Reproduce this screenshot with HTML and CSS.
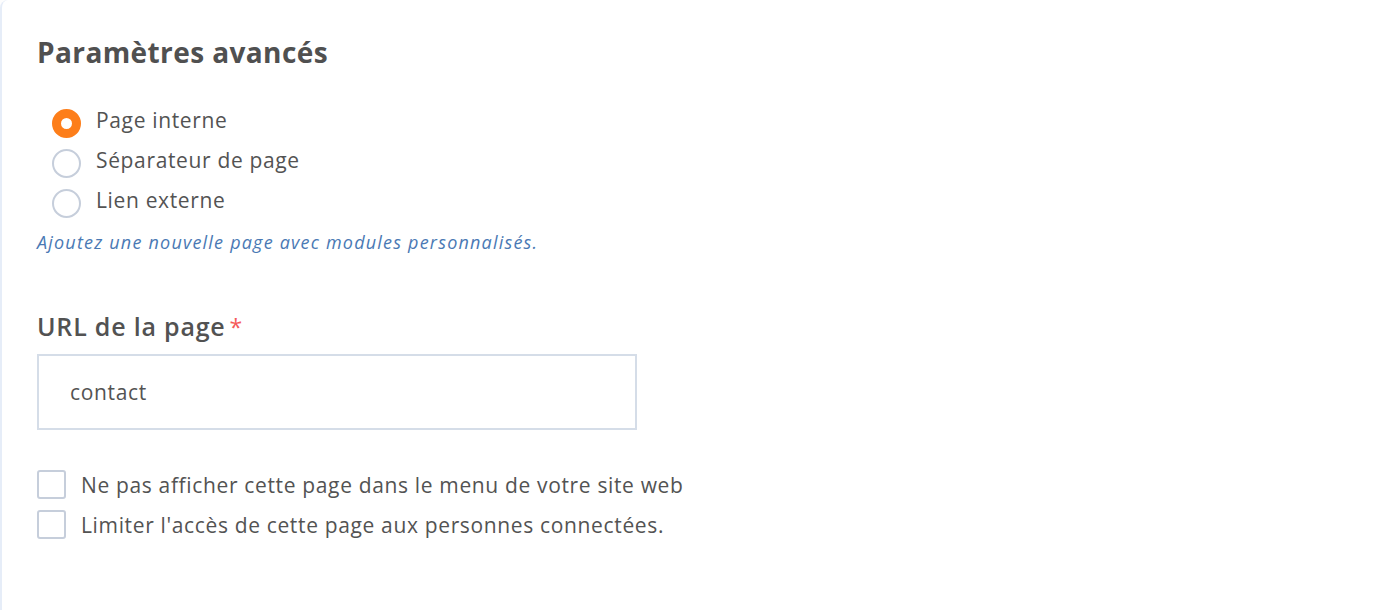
FILE: index.html
```html
<!DOCTYPE html>
<html lang="fr">
<head>
<meta charset="utf-8">
<title>Paramètres avancés</title>
<link rel="stylesheet" href="styles.css">
</head>
<body>
<div class="card">
  <h2 class="title">Paramètres avancés</h2>
  <div class="radios">
    <label class="radio-row"><span class="radio checked"></span><span class="opt">Page interne</span></label>
    <label class="radio-row"><span class="radio"></span><span class="opt">Séparateur de page</span></label>
    <label class="radio-row"><span class="radio"></span><span class="opt">Lien externe</span></label>
  </div>
  <p class="help">Ajoutez une nouvelle page avec modules personnalisés.</p>
  <div class="field">
    <label class="field-label">URL de la page<span class="req">*</span></label>
    <div class="input">contact</div>
  </div>
  <div class="checks">
    <label class="check-row"><span class="box"></span><span class="opt">Ne pas afficher cette page dans le menu de votre site web</span></label>
    <label class="check-row"><span class="box"></span><span class="opt">Limiter l'accès de cette page aux personnes connectées.</span></label>
  </div>
</div>
</body>
</html>
```
FILE: styles.css
```css
html, body {
  margin: 0;
  padding: 0;
  background: #fdfdfd;
}
body {
  font-family: "Open Sans", "Noto Sans", sans-serif;
  color: #535353;
  height: 610px;
  overflow: hidden;
}
.card {
  background: #fff;
  border-left: 2px solid #e6edf8;
  border-top-left-radius: 8px;
  height: 640px;
  padding: 34px 0 0 35px;
  box-sizing: border-box;
}
.title {
  margin: 0;
  font-size: 28px;
  font-weight: 700;
  letter-spacing: 0.4px;
  line-height: 36px;
  color: #505050;
}
.radios {
  display: flex;
  flex-direction: column;
  gap: 10px;
  margin-top: 35px;
  padding-left: 15px;
}
.radio-row {
  display: flex;
  align-items: center;
  gap: 15px;
  height: 30px;
}
.radio {
  width: 29px;
  height: 29px;
  box-sizing: border-box;
  border-radius: 50%;
  border: 2px solid #c6cedb;
  background: #fff;
  flex: none;
  margin-top: 7px;
}
.radio.checked {
  border: 9.5px solid #fd7e1a;
}
.opt {
  font-size: 21px;
  letter-spacing: 0.65px;
  line-height: 30px;
}
.help {
  margin: 15px 0 0;
  font-size: 18px;
  font-style: italic;
  letter-spacing: 1.2px;
  color: #4a79b4;
  line-height: 24px;
}
.field {
  margin-top: 57px;
}
.field-label {
  display: block;
  font-size: 25px;
  font-weight: 600;
  letter-spacing: 0.8px;
  line-height: 30px;
  color: #525252;
}
.req {
  color: #f55a5a;
  margin-left: 4px;
  font-size: 23px;
  font-weight: 400;
}
.input {
  margin-top: 12px;
  width: 600px;
  height: 76px;
  box-sizing: border-box;
  border: 2px solid #d5dde8;
  padding: 0 31px;
  display: flex;
  align-items: center;
  font-size: 21px;
  letter-spacing: 0.65px;
}
.checks {
  margin-top: 40px;
  display: flex;
  flex-direction: column;
  gap: 11px;
}
.check-row {
  display: flex;
  align-items: center;
  gap: 15px;
  height: 29px;
}
.box {
  width: 29px;
  height: 29px;
  box-sizing: border-box;
  border: 2px solid #c6cedb;
  border-radius: 3px;
  flex: none;
}
```
